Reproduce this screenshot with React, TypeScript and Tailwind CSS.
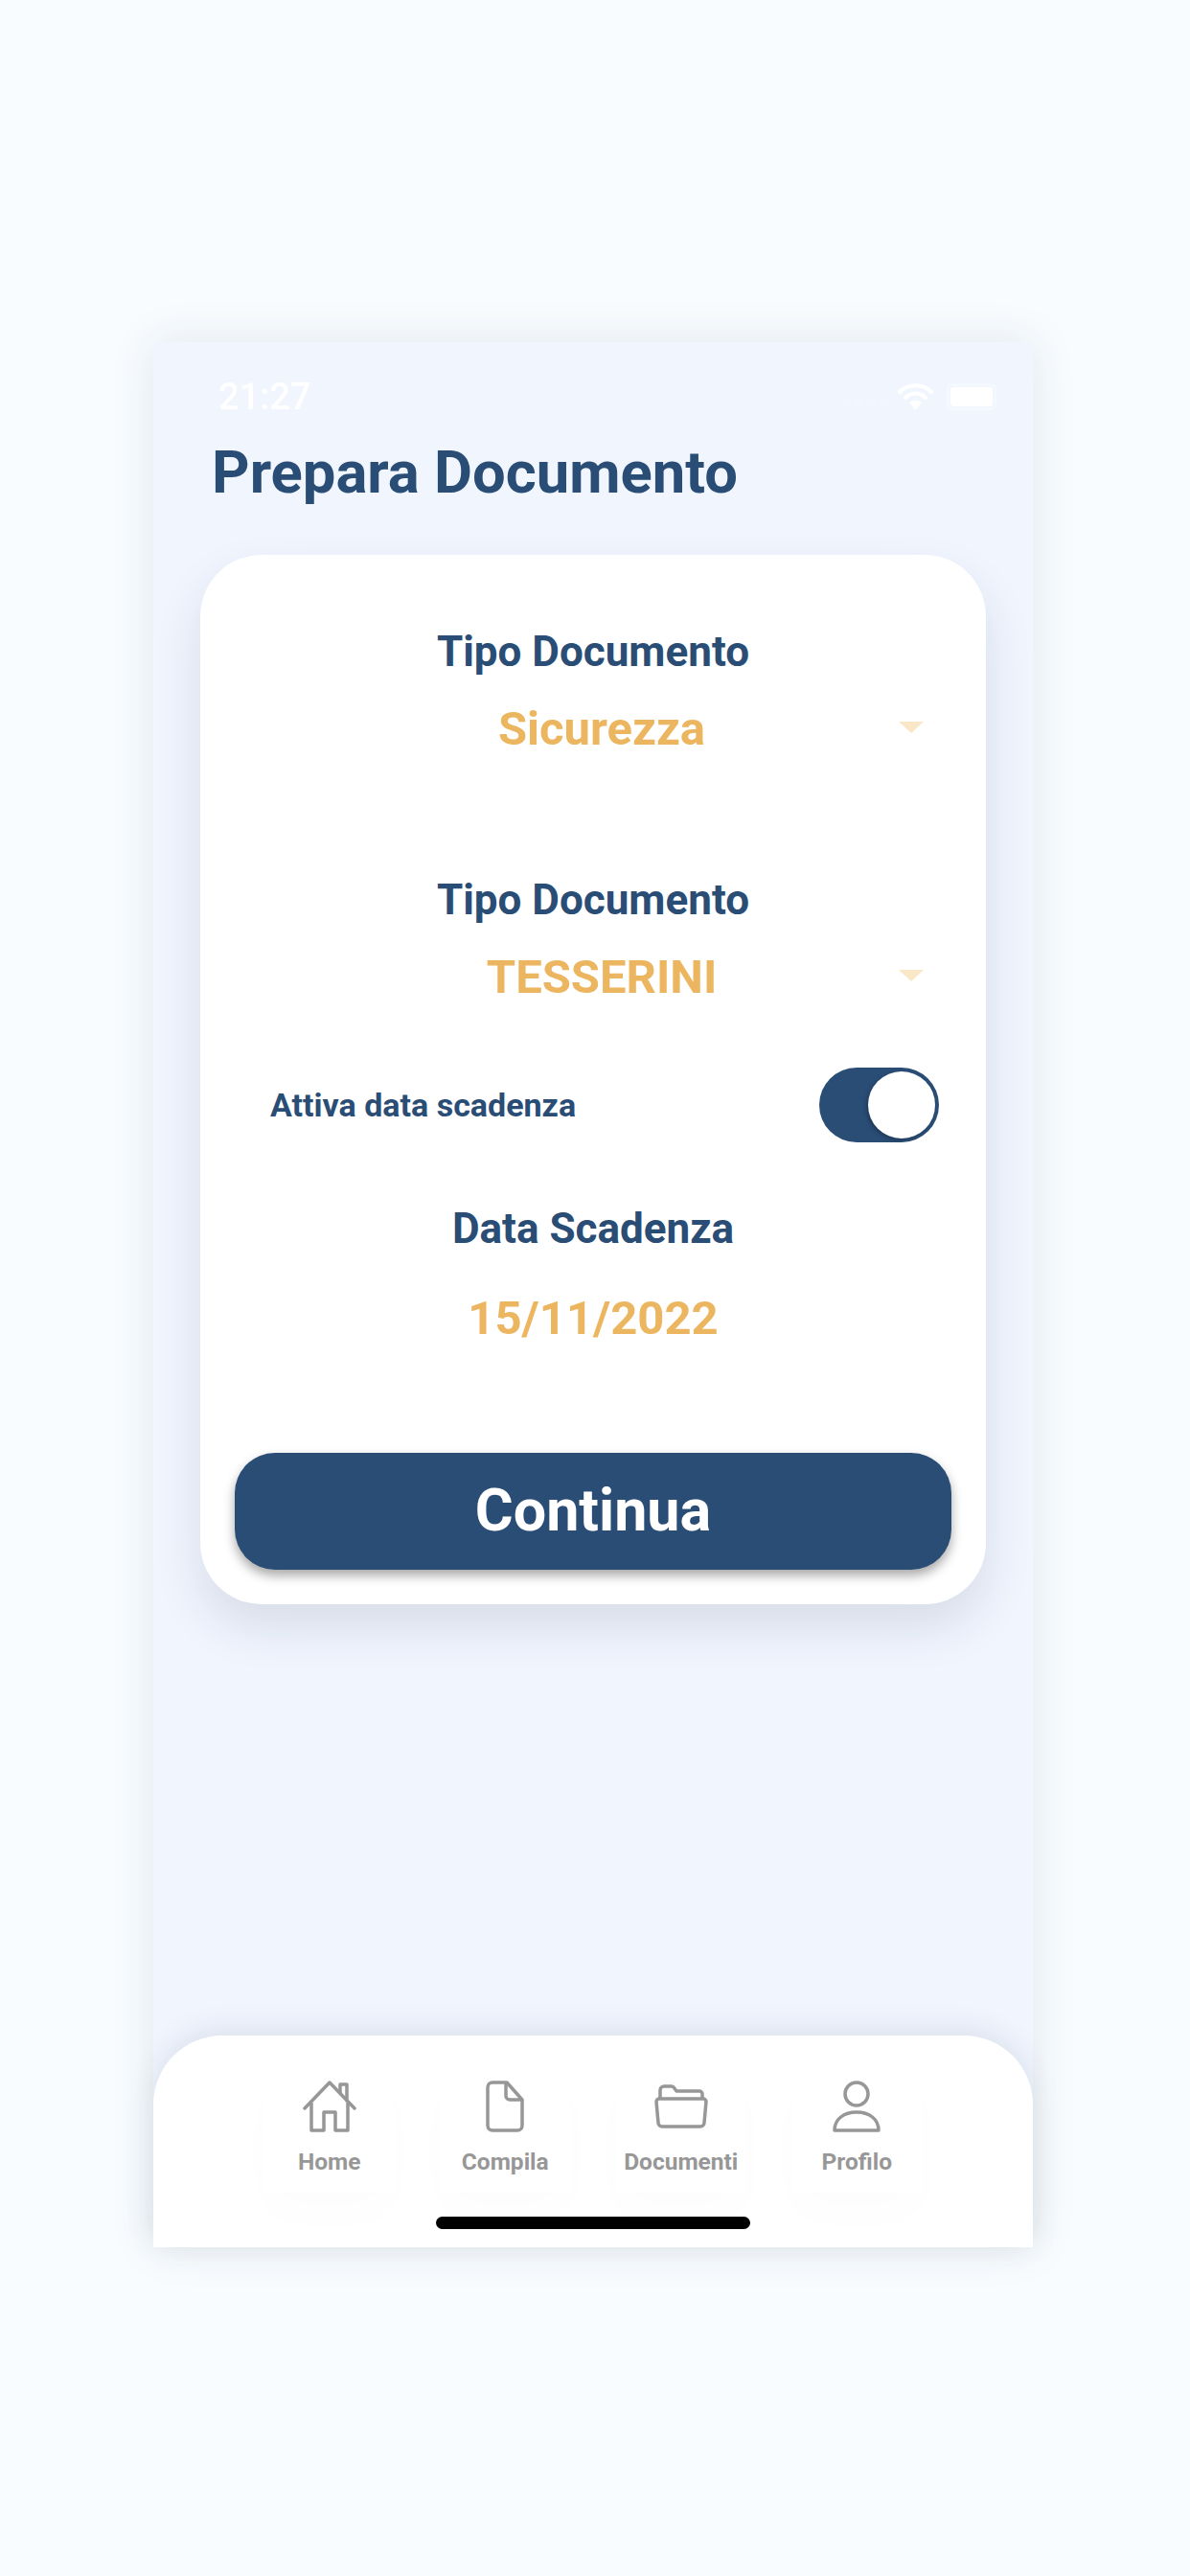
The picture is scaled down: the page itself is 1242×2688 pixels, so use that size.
import React from "react";

const font = { fontFamily: "Roboto, sans-serif" };

function Field({ label, value }: { label: string; value: string }) {
  return (
    <div className="flex flex-col items-center">
      <div className="text-[44px] leading-[50px] font-bold text-[#2a4d76]">{label}</div>
      <div className="relative mt-[31px] w-full flex justify-center pl-[18px]">
        <span className="text-[49px] leading-[50px] font-bold text-[#ecb55f]">{value}</span>
        <span className="absolute right-[29px] top-[17px] w-0 h-0 border-l-[13px] border-r-[13px] border-t-[12px] border-l-transparent border-r-transparent border-t-[#f9e7c8]" />
      </div>
    </div>
  );
}

function NavItem({ label, children }: { label: string; children: React.ReactNode }) {
  return (
    <div className="w-[135px] h-[133px] bg-white flex flex-col items-center shadow-[0_24px_50px_rgba(0,0,0,0.012)]">
      <div className="h-[72px] mt-[7px] flex items-center justify-center">{children}</div>
      <div className="mt-[7px] text-[24.5px] leading-[30px] font-bold text-[#979797] whitespace-nowrap">{label}</div>
    </div>
  );
}

export default function App() {
  return (
    <div style={font} className="min-h-[2688px] bg-[#f8fcff] pt-[357px] pl-[160px]">
      <div className="relative w-[918px] h-[1988px] bg-[#f0f5fe] shadow-[0_0_44px_rgba(40,50,70,0.10)] flex flex-col">
        <div className="h-[72px] pt-[42px] pl-[68px] pr-[38px] flex items-center justify-between">
          <span className="text-[38px] leading-[40px] text-white font-medium">21:27</span>
          <div className="flex items-center">
            <div className="flex gap-[4px] items-end mr-[10px] mt-[14px]">
              <div className="w-[9px] h-[8px] rounded-[2px] bg-[#f2f6fe]" />
              <div className="w-[9px] h-[8px] rounded-[2px] bg-[#f2f6fe]" />
              <div className="w-[9px] h-[8px] rounded-[2px] bg-[#f2f6fe]" />
              <div className="w-[9px] h-[8px] rounded-[2px] bg-[#f2f6fe]" />
            </div>
            <svg width="37" height="28" viewBox="0 0 37 28" fill="none">
              <path d="M2 9C11 0 26 0 35 9" stroke="#fff" strokeWidth="4" strokeLinecap="round" />
              <path d="M8 15C14 9 23 9 29 15" stroke="#fff" strokeWidth="4" strokeLinecap="round" />
              <path d="M18.5 28L12 20C15 17 22 17 25 20Z" fill="#fff" />
            </svg>
            <div className="ml-[14px] w-[52px] h-[28px] rounded-[6px] border-[3px] border-[#f4f8ff] p-[1px]">
              <div className="w-full h-full rounded-[3px] bg-white" />
            </div>
          </div>
        </div>
        <h1 className="mt-[29px] ml-[61px] text-[61.5px] leading-[70px] font-bold text-[#2a4d76]">Prepara Documento</h1>
        <div className="mt-[51px] mx-[49px] h-[1095px] rounded-[64px] bg-white shadow-[0_24px_50px_rgba(40,50,70,0.12)] px-[36px] pt-[76px]">
          <Field label="Tipo Documento" value="Sicurezza" />
          <div className="mt-[128px]">
            <Field label="Tipo Documento" value="TESSERINI" />
          </div>
          <div className="mt-[69px] flex items-center justify-between pl-[37px] pr-[13px]">
            <span className="text-[34px] leading-[40px] font-bold text-[#2a4d76]">Attiva data scadenza</span>
            <div className="w-[125px] h-[78px] rounded-full bg-[#2a4d76] p-[4px] flex justify-end">
              <div className="w-[70px] h-[70px] rounded-full bg-white shadow-[-2px_2px_4px_rgba(0,0,0,0.25)]" />
            </div>
          </div>
          <div className="mt-[65px] text-center text-[44px] leading-[50px] font-bold text-[#2a4d76]">Data Scadenza</div>
          <div className="mt-[41px] text-center text-[49px] leading-[56px] font-bold text-[#ecb55f]">15/11/2022</div>
          <button className="mt-[112px] w-full h-[122px] rounded-[42px] bg-[#2a4d76] text-white text-[61px] font-bold shadow-[0_6px_12px_rgba(0,0,0,0.35)]">
            Continua
          </button>
        </div>
        <div className="mt-auto h-[221px] rounded-t-[72px] bg-white shadow-[0_-6px_30px_rgba(40,50,70,0.10)] flex flex-col items-center">
          <div className="mt-[31px] flex gap-[48.5px]">
            <NavItem label="Home">
              <svg width="56" height="54" viewBox="0 0 56 54" fill="none" stroke="#979797" strokeWidth="3.5" strokeLinejoin="round" strokeLinecap="round">
                <path d="M2 29L28 2L54 29" />
                <path d="M9 24V52H22V33H34V52H47V24" />
                <path d="M39 13V4H46V21" />
              </svg>
            </NavItem>
            <NavItem label="Compila">
              <svg width="40" height="54" viewBox="0 0 40 54" fill="none" stroke="#979797" strokeWidth="3.5" strokeLinejoin="round">
                <path d="M7 2H22L38 20V47a5 5 0 0 1-5 5H7a5 5 0 0 1-5-5V7a5 5 0 0 1 5-5Z" />
                <path d="M21 2V16a4 4 0 0 0 4 4H38" />
              </svg>
            </NavItem>
            <NavItem label="Documenti">
              <svg width="56" height="46" viewBox="0 0 56 46" fill="none" stroke="#979797" strokeWidth="3.5" strokeLinejoin="round">
                <path d="M6 16V6a4 4 0 0 1 4-4H18a3 3 0 0 1 2.5 1.5L23 7H47a3 3 0 0 1 3 3V16" />
                <path d="M5 15H51a3 3 0 0 1 3 3L52 40a4 4 0 0 1-4 4H8a4 4 0 0 1-4-4L2 18a3 3 0 0 1 3-3Z" />
              </svg>
            </NavItem>
            <NavItem label="Profilo">
              <svg width="50" height="54" viewBox="0 0 50 54" fill="none" stroke="#979797" strokeWidth="3.5" strokeLinejoin="round">
                <circle cx="25" cy="14" r="12" />
                <path d="M2 52C2 40 12 33 25 33C38 33 48 40 48 52Z" />
              </svg>
            </NavItem>
          </div>
          <div className="mt-[25px] w-[328px] h-[13px] rounded-full bg-black" />
        </div>
      </div>
    </div>
  );
}
